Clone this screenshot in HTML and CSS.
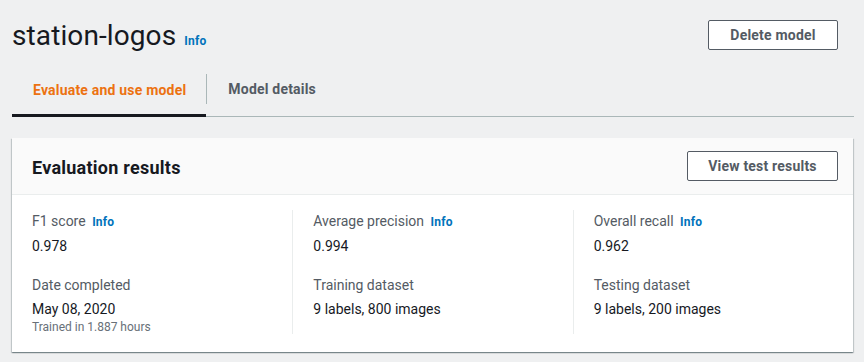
FILE: index.html
```html
<!DOCTYPE html>
<html lang="en">
<head>
<meta charset="utf-8">
<title>station-logos</title>
<link rel="stylesheet" href="styles.css">
</head>
<body>
<div class="page">
  <header class="page-header">
    <h1 class="title">station-logos <a class="info info-title" href="#">Info</a></h1>
    <button class="btn btn-delete" type="button">Delete model</button>
  </header>

  <nav class="tabs">
    <a class="tab tab-active" href="#">Evaluate and use model</a>
    <a class="tab tab-second" href="#"><span class="tab-label">Model details</span></a>
  </nav>

  <section class="card">
    <div class="card-header">
      <h2 class="card-title">Evaluation results</h2>
      <button class="btn btn-view" type="button">View test results</button>
    </div>
    <div class="card-body">
      <div class="col">
        <div class="pair">
          <div class="label">F1 score <a class="info" href="#">Info</a></div>
          <div class="value">0.978</div>
        </div>
        <div class="pair pair-second">
          <div class="label">Date completed</div>
          <div class="value">May 08, 2020</div>
          <div class="note">Trained in 1.887 hours</div>
        </div>
      </div>
      <div class="col col-divided">
        <div class="pair">
          <div class="label">Average precision <a class="info" href="#">Info</a></div>
          <div class="value">0.994</div>
        </div>
        <div class="pair pair-second">
          <div class="label">Training dataset</div>
          <div class="value">9 labels, 800 images</div>
        </div>
      </div>
      <div class="col col-divided">
        <div class="pair">
          <div class="label">Overall recall <a class="info" href="#">Info</a></div>
          <div class="value">0.962</div>
        </div>
        <div class="pair pair-second">
          <div class="label">Testing dataset</div>
          <div class="value">9 labels, 200 images</div>
        </div>
      </div>
    </div>
  </section>
</div>
</body>
</html>
```

FILE: styles.css
```css
* { box-sizing: border-box; }

html, body {
  margin: 0;
  padding: 0;
  background: #eff0f1;
}

body {
  font-family: Roboto, "Liberation Sans", Arial, sans-serif;
  color: #16191f;
  font-size: 14px;
  width: 864px;
  height: 362px;
  overflow: hidden;
}

.page {
  padding: 16px 0 0 0;
}

.page-header {
  display: flex;
  justify-content: space-between;
  align-items: flex-start;
  padding: 0 26px 0 12px;
  height: 40px;
}

.title {
  margin: 0;
  font-size: 28px;
  font-weight: 400;
  line-height: 40px;
  color: #16191f;
  letter-spacing: 0.1px;
}

.info {
  color: #0073bb;
  font-size: 12px;
  font-weight: 700;
  text-decoration: none;
  margin-left: 3px;
  letter-spacing: 0.2px;
}

.info-title {
  margin-left: 1px;
}

.btn {
  font-family: inherit;
  font-size: 14px;
  font-weight: 700;
  color: #545b64;
  background: #ffffff;
  border: 1px solid #545b64;
  border-radius: 2px;
  height: 30px;
  padding: 0 19px;
  line-height: 28px;
  letter-spacing: 0.2px;
  cursor: pointer;
}

.btn-delete {
  margin-top: 4px;
  width: 130px;
}

.btn-view {
  width: 151px;
}

.tabs {
  display: flex;
  margin: 8px 10px 0 12px;
  border-bottom: 1px solid #aab7b8;
}

.tab {
  display: flex;
  align-items: center;
  height: 53px;
  padding: 1px 20px 0 21px;
  border-bottom: 3px solid transparent;
  margin-bottom: -1px;
  font-size: 14px;
  font-weight: 700;
  letter-spacing: 0.2px;
  color: #545b64;
  text-decoration: none;
}

.tab-active {
  color: #ec7211;
  border-bottom-color: #16191f;
}

.tab-second {
  padding: 0 20px 0 0;
}

.tab-label {
  border-left: 1px solid #aab7b8;
  padding: 7px 0 7px 21px;
  line-height: 16px;
}

.card {
  margin: 21px 11px 0 12px;
  background: #ffffff;
  box-shadow: 0 1px 1px 0 rgba(0, 28, 36, 0.3), 1px 1px 1px 0 rgba(0, 28, 36, 0.15), -1px 1px 1px 0 rgba(0, 28, 36, 0.15);
}

.card-header {
  display: flex;
  justify-content: space-between;
  align-items: center;
  height: 57px;
  padding: 0 15px 0 20px;
  background: #fafafa;
  border-bottom: 1px solid #eaeded;
}

.card-title {
  margin: 0;
  padding-top: 3px;
  font-size: 18px;
  font-weight: 700;
  line-height: 22px;
  letter-spacing: 0.25px;
  color: #16191f;
}

.card-body {
  display: grid;
  grid-template-columns: 1fr 1fr 1fr;
  padding: 15px 0 18px 0;
}

.col {
  padding-left: 20px;
}

.col-divided {
  border-left: 1px solid #eaeded;
}

.label {
  color: #545b64;
  line-height: 22px;
}

.value {
  color: #16191f;
  line-height: 22px;
  margin-top: 2px;
}

.pair-second {
  margin-top: 17px;
}

.note {
  color: #687078;
  font-size: 12px;
  line-height: 14px;
}
```
